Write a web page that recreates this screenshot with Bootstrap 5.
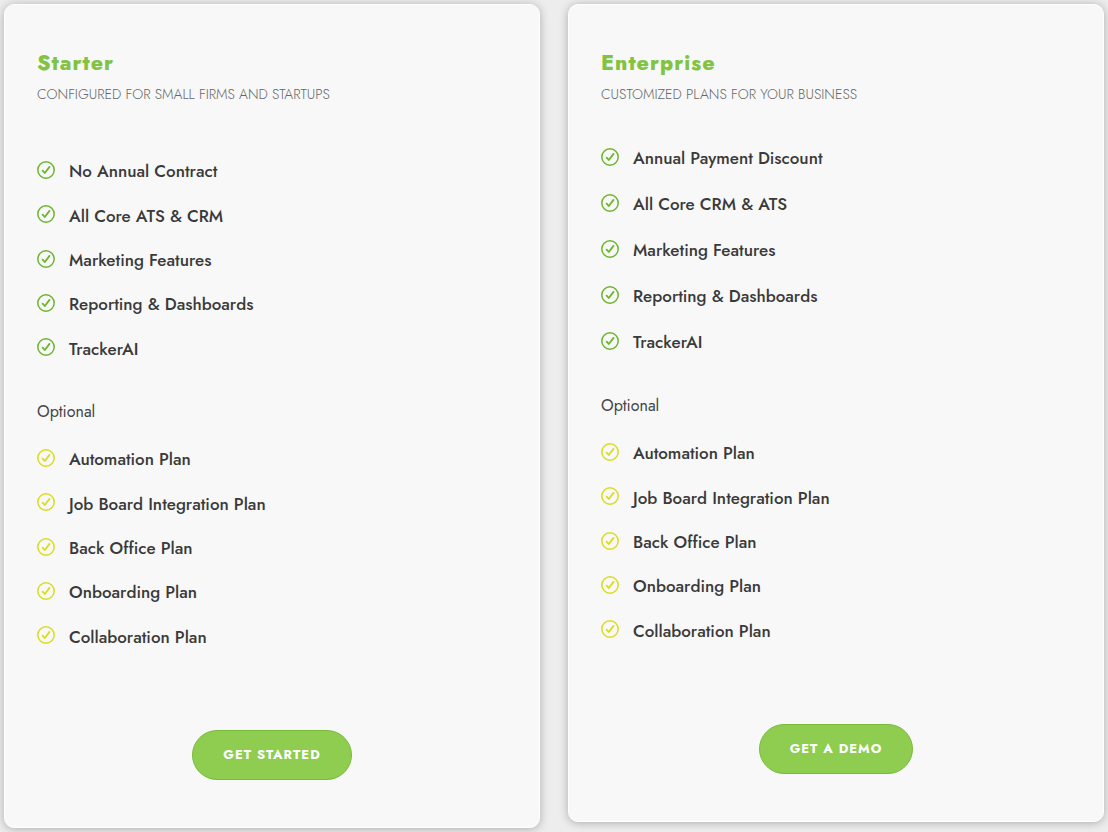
<!DOCTYPE html>
<html lang="en">
<head>
<meta charset="utf-8">
<meta name="viewport" content="width=device-width, initial-scale=1">
<title>Plans</title>
<link href="https://cdn.jsdelivr.net/npm/bootstrap@5.3.0/dist/css/bootstrap.min.css" rel="stylesheet">
<style>
  body { background: #ededed; color: #333; font-family: Jost, Lato, sans-serif; }
  .plans { padding: 4px; gap: 28px; }
  .plan { background: #f8f8f8; border: 1px solid #fff; border-radius: 10px; box-shadow: 0 1px 10px rgba(0,0,0,.28); padding: 43px 32px 47px; }
  .plan-name { color: #82c341; font-size: 21px; line-height: 30px; font-weight: 800; letter-spacing: 1px; }
  .plan-note { color: #666; font-size: 14px; line-height: 20px; padding-top: 6px; font-weight: 300; }
  .features { min-height: 222px; font-size: 17px; line-height: 24px; font-weight: 500; }
  .features svg { width: 20px; height: 20px; margin: 0 13px 3px -1px; flex: none; }
  .included { color: #6db52d; margin-top: 45px; }
  .included-roomy { min-height: 230px; margin-top: 31px; }
  .extra { color: #d9dd1c; margin-top: 13px; }
  .features span { color: #3a3a3a; }
  .optional-title { font-size: 16px; line-height: 25px; font-weight: 400; margin: 28px 0 0; color: #444; }
  .plan-btn { background: #8ecd4f; border: 1px solid #7bbb3c; border-radius: 25px; color: #fff; font-size: 13px; line-height: 18px; font-weight: 700; letter-spacing: 1px; padding: 15px 30px; margin-top: 71px; }
  .plan-btn:hover { background: #7bbb3c; color: #fff; }
</style>
</head>
<body>
<svg class="d-none" aria-hidden="true">
  <symbol id="check" viewBox="0 0 20 20">
    <circle cx="10" cy="10" r="8.2" fill="none" stroke="currentColor" stroke-width="1.5"/>
    <path d="M6.6 10.6 8.8 13 13.5 6.9" fill="none" stroke="currentColor" stroke-width="1.8" stroke-linecap="round" stroke-linejoin="round"/>
  </symbol>
</svg>
<main class="plans d-flex flex-column flex-md-row align-items-start">
  <section class="plan w-100">
    <h2 class="plan-name m-0">Starter</h2>
    <p class="plan-note text-uppercase m-0">Configured for small firms and startups</p>
    <ul class="features included list-unstyled d-flex flex-column mb-0">
      <li class="d-flex align-items-center flex-fill"><svg><use href="#check"/></svg><span>No Annual Contract</span></li>
      <li class="d-flex align-items-center flex-fill"><svg><use href="#check"/></svg><span>All Core ATS &amp; CRM</span></li>
      <li class="d-flex align-items-center flex-fill"><svg><use href="#check"/></svg><span>Marketing Features</span></li>
      <li class="d-flex align-items-center flex-fill"><svg><use href="#check"/></svg><span>Reporting &amp; Dashboards</span></li>
      <li class="d-flex align-items-center flex-fill"><svg><use href="#check"/></svg><span>TrackerAI</span></li>
    </ul>
    <h3 class="optional-title">Optional</h3>
    <ul class="features extra list-unstyled d-flex flex-column mb-0">
      <li class="d-flex align-items-center flex-fill"><svg><use href="#check"/></svg><span>Automation Plan</span></li>
      <li class="d-flex align-items-center flex-fill"><svg><use href="#check"/></svg><span>Job Board Integration Plan</span></li>
      <li class="d-flex align-items-center flex-fill"><svg><use href="#check"/></svg><span>Back Office Plan</span></li>
      <li class="d-flex align-items-center flex-fill"><svg><use href="#check"/></svg><span>Onboarding Plan</span></li>
      <li class="d-flex align-items-center flex-fill"><svg><use href="#check"/></svg><span>Collaboration Plan</span></li>
    </ul>
    <div class="text-center"><button type="button" class="btn plan-btn text-uppercase">Get Started</button></div>
  </section>
  <section class="plan w-100">
    <h2 class="plan-name m-0">Enterprise</h2>
    <p class="plan-note text-uppercase m-0">Customized plans for your business</p>
    <ul class="features included included-roomy list-unstyled d-flex flex-column mb-0">
      <li class="d-flex align-items-center flex-fill"><svg><use href="#check"/></svg><span>Annual Payment Discount</span></li>
      <li class="d-flex align-items-center flex-fill"><svg><use href="#check"/></svg><span>All Core CRM &amp; ATS</span></li>
      <li class="d-flex align-items-center flex-fill"><svg><use href="#check"/></svg><span>Marketing Features</span></li>
      <li class="d-flex align-items-center flex-fill"><svg><use href="#check"/></svg><span>Reporting &amp; Dashboards</span></li>
      <li class="d-flex align-items-center flex-fill"><svg><use href="#check"/></svg><span>TrackerAI</span></li>
    </ul>
    <h3 class="optional-title">Optional</h3>
    <ul class="features extra list-unstyled d-flex flex-column mb-0">
      <li class="d-flex align-items-center flex-fill"><svg><use href="#check"/></svg><span>Automation Plan</span></li>
      <li class="d-flex align-items-center flex-fill"><svg><use href="#check"/></svg><span>Job Board Integration Plan</span></li>
      <li class="d-flex align-items-center flex-fill"><svg><use href="#check"/></svg><span>Back Office Plan</span></li>
      <li class="d-flex align-items-center flex-fill"><svg><use href="#check"/></svg><span>Onboarding Plan</span></li>
      <li class="d-flex align-items-center flex-fill"><svg><use href="#check"/></svg><span>Collaboration Plan</span></li>
    </ul>
    <div class="text-center"><button type="button" class="btn plan-btn text-uppercase">Get a Demo</button></div>
  </section>
</main>
<script src="https://cdn.jsdelivr.net/npm/bootstrap@5.3.0/dist/js/bootstrap.bundle.min.js"></script>
</body>
</html>
